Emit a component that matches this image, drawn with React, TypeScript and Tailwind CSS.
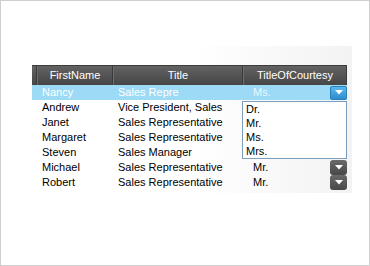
import React from "react";

type Row = { first: string; title: string; toc: string };

const rows: Row[] = [
  { first: "Andrew", title: "Vice President, Sales", toc: "" },
  { first: "Janet", title: "Sales Representative", toc: "" },
  { first: "Margaret", title: "Sales Representative", toc: "" },
  { first: "Steven", title: "Sales Manager", toc: "" },
  { first: "Michael", title: "Sales Representative", toc: "Mr." },
  { first: "Robert", title: "Sales Representative", toc: "Mr." },
];

const options = ["Dr.", "Mr.", "Ms.", "Mrs."];

const Arrow = () => (
  <svg width="8" height="5" viewBox="0 0 8 5">
    <path d="M0 0h8L4 4.5z" fill="#fff" />
  </svg>
);

const DropButton = ({ blue }: { blue?: boolean }) => (
  <div
    className={
      blue
        ? "flex h-[14px] w-[17px] items-center justify-center rounded-[2px] border border-[#2a7fb8] bg-gradient-to-b from-[#5bb8ea] to-[#2b8dd0]"
        : "flex h-[15px] w-[17px] items-center justify-center rounded-[3px] bg-gradient-to-b from-[#6a6a6a] to-[#484848]"
    }
  >
    <Arrow />
  </div>
);

export default function App() {
  return (
    <div className="h-[266px] w-[370px] border border-[#cfcfcf] bg-white font-['Liberation_Sans',Arial,sans-serif] text-[11px]">
      <div className="ml-[31px] mt-[45px] w-[320px] bg-gradient-to-r from-white via-white to-[#f3f3f3]">
        <div className="h-[19px]" />
        {/* header */}
        <div className="flex h-[20px] w-[315px] border-t border-[#3c3c3c] bg-gradient-to-b from-[#626262] to-[#464646] text-white">
          <div className="w-[5px] border-r border-[#3a3a3a]" />
          <div className="flex w-[76px] items-center justify-center border-r border-[#3a3a3a] border-l border-l-[#6c6c6c]">FirstName</div>
          <div className="flex w-[130px] items-center justify-center border-r border-[#3a3a3a] border-l border-l-[#6c6c6c]">Title</div>
          <div className="flex flex-1 items-center justify-center border-l border-l-[#6c6c6c] border-r border-[#3a3a3a]">TitleOfCourtesy</div>
        </div>
        <div className="relative pb-[3px]">
          {/* selected row */}
          <div className="flex h-[15px] w-[315px] items-center bg-[#9cdaf5] text-white">
            <div className="w-[10px]" />
            <div className="w-[76px]">Nancy</div>
            <div className="w-[130px]">Sales Repre</div>
            <div className="flex flex-1 items-center justify-between pl-[5px]">
              <span className="text-[#eaf7fd]">Ms.</span>
              <DropButton blue />
            </div>
          </div>
          {rows.map((r) => (
            <div key={r.first} className="flex h-[15px] w-[315px] items-center text-black">
              <div className="w-[10px]" />
              <div className="w-[76px]">{r.first}</div>
              <div className="w-[130px]">{r.title}</div>
              <div className="flex flex-1 items-center justify-between pl-[5px]">
                <span>{r.toc}</span>
                {r.toc && <DropButton />}
              </div>
            </div>
          ))}
          {/* open list */}
          <div className="absolute left-[210px] top-[16px] flex h-[58px] w-[105px] flex-col border border-[#7b9ebf] bg-white pl-[3px] leading-[14px] text-black">
            {options.map((o) => (
              <div key={o} className="h-[14px]">{o}</div>
            ))}
          </div>
        </div>
      </div>
    </div>
  );
}
